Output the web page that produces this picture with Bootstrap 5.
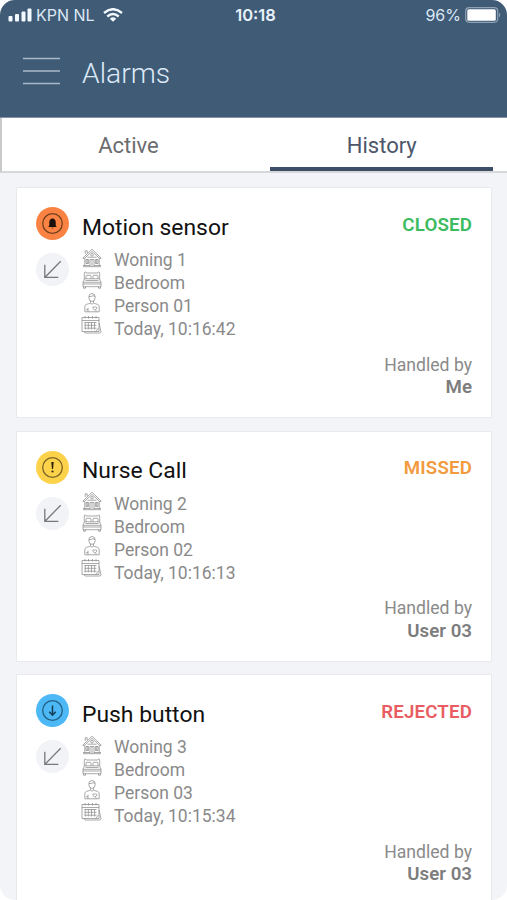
<!DOCTYPE html>
<html lang="en">
<head>
<meta charset="utf-8">
<meta name="viewport" content="width=device-width, initial-scale=1">
<title>Alarms</title>
<link href="https://cdn.jsdelivr.net/npm/bootstrap@5.3.0/dist/css/bootstrap.min.css" rel="stylesheet">
<style>
html { background: #fff; }
body { background: #fff; font-family: Roboto, sans-serif; overflow: hidden; }
.screen { height: 900px; background: #f2f4f8; border-radius: 15px; }
.topbar { background: #3f5b76; height: 118px; border-bottom: 1px solid #8494a6; }
.status { height: 30px; padding: 0 6px 0 8px; font-family: Inter, sans-serif; font-size: 16px; color: #dce8f5; display: grid; grid-template-columns: 1fr auto 1fr; }
.clock { font-weight: 600; font-size: 16.5px; color: #e8f1fb; padding-left: 2px; }
.title-row { height: 85px; padding-left: 23px; gap: 22px; }
.title-row svg { margin-top: -3px; }
.title-row h1 { font-size: 28.3px; font-weight: 300; color: #dce9f7; line-height: 34px; padding-top: 2px; }
.tabs { height: 55px; background: #fff; border-bottom: 2px solid #d6d8da; border-left: 2px solid #c9cacc; }
.tabs a { font-size: 22px; color: #6c6c6e; text-decoration: none; line-height: 55px; }
.tabs .tab-active { width: 268.3px; }
.tabs .tab-history { width: 223px; color: #4d566b; height: 53px; border-bottom: 4px solid #3c4f66; }
.tabs .tab-one { width: 253px; }
.feed { padding: 14.4px 15px 0 16px; gap: 12.8px; }
.alarm { height: 230.7px; flex: none; border: 1px solid #e8eaee; border-radius: 1px; background: #fff; padding: 19px 19px 0; }
.marks { width: 33px; gap: 13px; }
.marks svg { width: 33px; height: 33px; display: block; }
.details { padding-left: 13px; }
.details h2 { font-size: 22.9px; font-weight: 400; color: #111; line-height: 28px; margin: 6.6px 0 7.4px; }
.state { font-size: 18.7px; font-weight: 600; line-height: 22px; margin-top: 6.600px; letter-spacing: .15px; }
.closed { color: #3cbb60; }
.missed { color: #f29a3e; }
.rejected { color: #e95d62; }
.fact { height: 22.9px; font-size: 17.5px; line-height: 22.9px; color: #8a8a8a; gap: 12px; }
.fact svg { width: 20px; height: 20px; margin-top: -1.400px; overflow: visible; }
symbol { overflow: visible; }
.handled { font-size: 17.6px; line-height: 22.5px; color: #8a8a8a; margin-top: 12.8px; }
.handled strong { font-size: 18.7px; font-weight: 600; color: #7d7d7d; }
</style>
</head>
<body>
<svg class="d-none" xmlns="http://www.w3.org/2000/svg">
  <symbol id="house" viewBox="0 0 20 20"><g fill="none" stroke="#8c8c8c" stroke-width=".75" stroke-linejoin="round"><path d="M.8 10.2 10 1.2l9.2 9-1.2.6-8-7.4-8 7.4zM3.2 5.8V2.8h2v2.5M2.8 10.5V18M17.2 10.5V18M1 18.7h18M1 17.5h7M12 17.5h7M8 18.5v-7h4v7M10 11.5v7M4 11.5h2.6v4H4zM13.4 11.5H16v4h-2.600zM5.300 11.500v4M14.700 11.500v4M5.500 9.200h9"/><circle cx="10" cy="6.800" r="1.300"/></g></symbol>
  <symbol id="bed" viewBox="0 1 20 20"><g fill="none" stroke="#8c8c8c" stroke-width=".75" stroke-linejoin="round"><path d="M2.300 9V3q0-1 1-1 .8 0 .8 1h11.800q0-1 .8-1 1 0 1 1v6M4 8.700V6.200q0-.9 1-.9h3q1 0 1 .9v2.500M11 8.700V6.200q0-.9 1-.9h3q1 0 1 .9v2.500M2.500 8.800h15l1.500 3.400v4.500H1v-4.500zM1 12.300h18M1 14h18M1.500 16.700v1.500h2v-1.500M16.500 16.700v1.500h2v-1.500M3.500 10.500h13"/></g></symbol>
  <symbol id="person" viewBox="0 1.300 20 20"><g fill="none" stroke="#8c8c8c" stroke-width=".75" stroke-linejoin="round"><path d="M6.800 4.700Q6.500.8 10 .8t3.200 3.900q0 4-3.200 4t-3.200-4zM7 3.900q2.800.3 4.300-1.200 0 1 1.700 1.200M8.500 8.200v1.800q0 .7-4 1.700-1.700.5-1.700 2.500v4.900h14.400v-4.900q0-2-1.700-2.500-4-1-4-1.700V8.200M8.200 10.400q1.800 2.200 3.600 0M6 19v-4M14 19v-1.500M10.800 14.500q1.200-1 2 .2 1-1.200 2 0 .6 1.200-2 2.700-2.500-1.500-2-2.900M4 17h2"/></g></symbol>
  <symbol id="calendar" viewBox="0 2 20 20"><g fill="none" stroke="#8c8c8c" stroke-width=".75" stroke-linejoin="round"><path d="M0 2.500h17v14H0zM0 5.500h17M3 1v2.500M6.500 1v2.500M10.500 1v2.500M14 1v2.500M17 8l2 8.800q.2 1.200-1.500 1.200H3l-1-1.500M16.500 13l-3 3.500"/><path d="M2.500 7.500h12M2.500 10.300h12M2.500 13.200h12M3.200 7v7.500M6.300 7v7.500M9.500 7v7.500M12.600 7v7.500"/></g></symbol>
  <symbol id="incoming" viewBox="0 0 33 33"><circle cx="16.500" cy="16.500" r="16.500" fill="#f1f3f7"/><path d="M24.700 8.200 9 24.200M8.800 11.700v12.700h13.500" fill="none" stroke="#77787b" stroke-width="1.300"/></symbol>
</svg>

<div class="screen overflow-hidden">
  <header class="topbar">
    <div class="status align-items-center">
      <div class="d-flex align-items-center">
        <svg width="24" height="14" viewBox="0 0 24 14" fill="#f4f9ff"><rect x="0.500" y="8" width="4" height="5.500" rx="1"/><rect x="7" y="6" width="4" height="7.500" rx="1"/><rect x="13.500" y="3.500" width="4" height="10" rx="1"/><rect x="19.500" y="0.500" width="4" height="13" rx="1"/></svg>
        <span class="carrier ms-1">KPN NL</span>
        <svg class="ms-2" width="20" height="14" viewBox="0 0 20 14" fill="none" stroke="#f4f9ff" stroke-width="2.400"><path d="M1 5Q10-2.600 19 5M4.300 8.500Q10 3.700 15.700 8.500"/><path d="M6.800 10.700Q10 8 13.200 10.700L10 13.800z" fill="#f4f9ff" stroke="none"/></svg>
      </div>
      <div class="clock">10:18</div>
      <div class="d-flex align-items-center justify-content-end">
        <span class="battery-pct me-1">96%</span>
        <svg width="36" height="16" viewBox="0 0 36 16"><rect x=".7" y=".7" width="32" height="14.600" rx="3.500" fill="none" stroke="#8fa2b6" stroke-width="1.200"/><rect x="2.300" y="2.300" width="28.500" height="11.400" rx="1.500" fill="#fff"/><path d="M34 5.500q2.500 2.500 0 5z" fill="#8fa2b6"/></svg>
      </div>
    </div>
    <div class="title-row d-flex align-items-center">
      <svg width="37" height="28" viewBox="0 0 37 28" stroke="#a9b9ca" stroke-width="1.500"><path d="M0 1.500h37M0 14h37M0 26.500h37"/></svg>
      <h1 class="m-0">Alarms</h1>
    </div>
  </header>

  <nav class="tabs d-flex">
    <div class="tab-active"><a href="#" class="tab-one d-block text-center">Active</a></div>
    <a href="#" class="tab-history text-center">History</a>
  </nav>

  <main class="feed d-flex flex-column">
    <article class="alarm">
      <div class="d-flex">
        <div class="marks d-flex flex-column">
          <svg viewBox="0 0 33 33"><circle cx="16.500" cy="16.500" r="16.500" fill="#fa8344"/><circle cx="16.500" cy="16.500" r="9.800" fill="none" stroke="#71401f" stroke-width="1.300"/><path d="M16.500 11.500q3.200.3 3.200 4v3l1 1.500h-8.400l1-1.500v-3q0-3.700 3.200-4zM15.300 20.700h2.400q-1.200 1.500-2.400 0z" fill="#1b100a"/></svg>
          <svg><use href="#incoming"/></svg>
        </div>
        <div class="details flex-grow-1">
          <h2>Motion sensor</h2>
          <div class="fact d-flex"><svg><use href="#house"/></svg><span>Woning 1</span></div>
          <div class="fact d-flex"><svg><use href="#bed"/></svg><span>Bedroom</span></div>
          <div class="fact d-flex"><svg><use href="#person"/></svg><span>Person 01</span></div>
          <div class="fact d-flex"><svg><use href="#calendar"/></svg><span>Today, 10:16:42</span></div>
        </div>
        <div class="state closed">CLOSED</div>
      </div>
      <div class="handled text-end">Handled by<br><strong>Me</strong></div>
    </article>

    <article class="alarm">
      <div class="d-flex">
        <div class="marks d-flex flex-column">
          <svg viewBox="0 0 33 33"><circle cx="16.500" cy="16.500" r="16.500" fill="#fdd24b"/><circle cx="16.500" cy="16.500" r="9.800" fill="none" stroke="#7a6528" stroke-width="1.300"/><path d="M15.300 11h2.400l-.6 7h-1.200z" fill="#2b230d"/><circle cx="16.500" cy="20.500" r="1.100" fill="#2b230d"/></svg>
          <svg><use href="#incoming"/></svg>
        </div>
        <div class="details flex-grow-1">
          <h2>Nurse Call</h2>
          <div class="fact d-flex"><svg><use href="#house"/></svg><span>Woning 2</span></div>
          <div class="fact d-flex"><svg><use href="#bed"/></svg><span>Bedroom</span></div>
          <div class="fact d-flex"><svg><use href="#person"/></svg><span>Person 02</span></div>
          <div class="fact d-flex"><svg><use href="#calendar"/></svg><span>Today, 10:16:13</span></div>
        </div>
        <div class="state missed">MISSED</div>
      </div>
      <div class="handled text-end">Handled by<br><strong>User 03</strong></div>
    </article>

    <article class="alarm">
      <div class="d-flex">
        <div class="marks d-flex flex-column">
          <svg viewBox="0 0 33 33"><circle cx="16.500" cy="16.500" r="16.500" fill="#4cb8f5"/><circle cx="16.500" cy="16.500" r="9.800" fill="none" stroke="#235f83" stroke-width="1.300"/><path d="M16.500 11.500v9.500M13.300 17.800l3.200 3.400 3.200-3.400" fill="none" stroke="#123c56" stroke-width="1.500"/></svg>
          <svg><use href="#incoming"/></svg>
        </div>
        <div class="details flex-grow-1">
          <h2>Push button</h2>
          <div class="fact d-flex"><svg><use href="#house"/></svg><span>Woning 3</span></div>
          <div class="fact d-flex"><svg><use href="#bed"/></svg><span>Bedroom</span></div>
          <div class="fact d-flex"><svg><use href="#person"/></svg><span>Person 03</span></div>
          <div class="fact d-flex"><svg><use href="#calendar"/></svg><span>Today, 10:15:34</span></div>
        </div>
        <div class="state rejected">REJECTED</div>
      </div>
      <div class="handled text-end">Handled by<br><strong>User 03</strong></div>
    </article>
  </main>
</div>
<script src="https://cdn.jsdelivr.net/npm/bootstrap@5.3.0/dist/js/bootstrap.bundle.min.js"></script>
</body>
</html>
